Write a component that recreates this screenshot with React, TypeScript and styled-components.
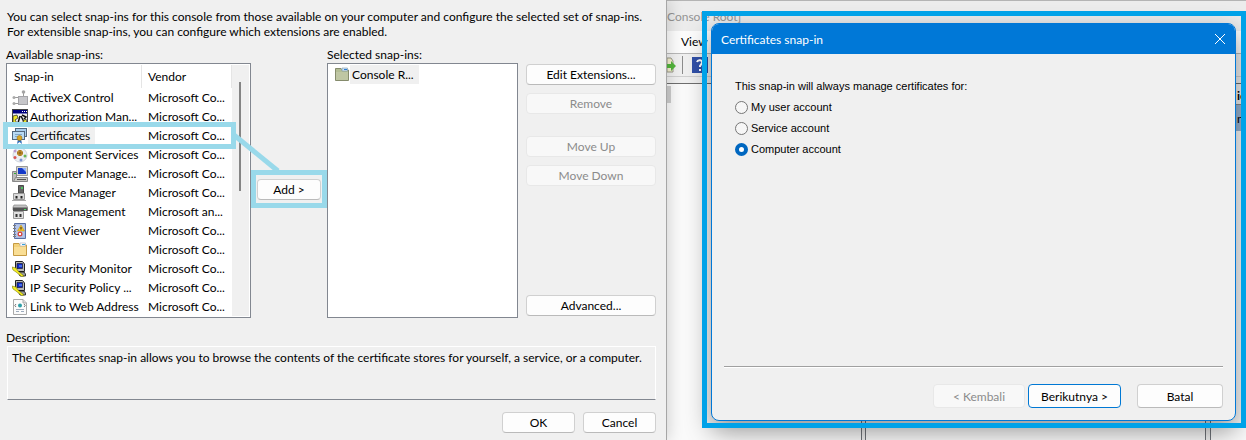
import React from "react";
import styled, { createGlobalStyle, css } from "styled-components";

const Global = createGlobalStyle`
  * { box-sizing: border-box; }
  body { margin: 0; font: 12px/15px Lato, "Open Sans", sans-serif; color: #000; background: #f0f0f0; }
  h1, h2, p, fieldset { margin: 0; padding: 0; border: 0; font: inherit; }
  button, input, textarea { font: inherit; color: inherit; }
`;

const Desktop = styled.div`
  display: grid;
  grid-template-columns: minmax(0, 667fr) minmax(0, 579fr);
  min-height: 100vh;
  overflow: hidden;
`;

/* ---------- Snap-in picker ---------- */
const Picker = styled.section`
  position: relative;
  z-index: 1;
  padding: 9px 10px 7px 6px;
  background: #f0f0f0;
  border-right: 1px solid #a6a6a6;
  box-shadow: 2px 0 14px rgba(0, 0, 0, 0.16);
`;
const Intro = styled.p`
  padding-left: 1px;
  white-space: nowrap;
`;
const Columns = styled.div`
  display: grid;
  grid-template-columns: minmax(0, 245fr) 76px minmax(0, 191fr) 138px;
  margin-top: 8px;
`;
const Column = styled.div`
  display: flex;
  flex-direction: column;
`;
const Label = styled.h2`
  height: 16px;
  line-height: 16px;
`;
const ListFrame = styled.div`
  position: relative;
  display: flex;
  align-items: flex-start;
  flex: 1;
  min-height: 255px;
  padding: 1px;
  background: #fff;
  border: 1px solid #828790;
`;
const TableArea = styled.div`
  flex: 1;
  min-width: 0;
`;
const Table = styled.table`
  width: 100%;
  table-layout: fixed;
  border-collapse: separate;
  border-spacing: 0;
  text-align: left;
  white-space: nowrap;
`;
const HeadCell = styled.th<{ $w?: number }>`
  height: 23px;
  width: ${(p) => (p.$w ? p.$w + "px" : "auto")};
  padding: 0 6px;
  font-weight: 400;
  border-right: 1px solid #e5e5e5;
`;
const Cell = styled.td`
  height: 19px;
  padding: 0 0 0 6px;
`;
const NameCell = styled(Cell)`
  padding-left: 4px;
`;
const Item = styled.span<{ $selected?: boolean }>`
  display: flex;
  align-items: center;
  height: 19px;
  span {
    height: 19px;
    line-height: 19px;
    padding: 0 5px 0 2px;
    ${(p) => p.$selected && css`background: #f0f0f0;`}
  }
`;
const Glyph = styled.svg`
  flex: none;
  width: 16px;
  height: 16px;
`;
const ScrollTrack = styled.div`
  align-self: stretch;
  width: 17px;
  padding: 17px 0 0 7px;
  background: #f0f0f0;
  &::before {
    content: "";
    display: block;
    width: 2px;
    height: 109px;
    background: #858585;
  }
`;
const RowMark = styled.div`
  position: absolute;
  left: -4px;
  right: 14px;
  top: 58px;
  height: 27px;
  border: 5px solid #99d9ea;
`;
const Connector = styled.svg`
  position: absolute;
  right: -34px;
  top: 66px;
  width: 52px;
  height: 44px;
`;
const AddMark = styled.div`
  display: grid;
  place-items: center;
  width: 76px;
  height: 38px;
  margin-top: 123px;
  border: 5px solid #99d9ea;
`;
const TreeItem = styled(Item)`
  margin-left: 5px;
`;
const Actions = styled.div`
  display: flex;
  flex-direction: column;
  gap: 8px;
  padding: 17px 0 2px 8px;
`;
const Gap = styled.div<{ $grow?: boolean }>`
  height: 6px;
  flex: ${(p) => (p.$grow ? 1 : "none")};
`;
const Button = styled.button<{ $w?: number; $tall?: boolean; $main?: boolean }>`
  width: ${(p) => (p.$w ? p.$w + "px" : "auto")};
  height: ${(p) => (p.$tall ? 24 : 21)}px;
  padding: 0;
  line-height: 15px;
  background: #fdfdfd;
  border: 1px solid #d0d0d0;
  border-bottom-color: #bababa;
  border-radius: 4px;
  ${(p) => p.$main && css`border-color: #0078d4;`}
  &:disabled {
    color: #8b8b8b;
    background: #f8f8f8;
    border-color: #e8e8e8;
  }
`;
const DescriptionLabel = styled(Label)`
  margin-top: 12px;
`;
const Description = styled.p`
  min-height: 54px;
  margin-left: 1px;
  padding: 3px 4px;
  white-space: nowrap;
  border: 1px solid #fff;
  border-bottom-color: #828790;
`;
const Footer = styled.div`
  display: flex;
  justify-content: flex-end;
  gap: 8px;
  margin-top: 12px;
`;

/* ---------- Console window behind ---------- */
const Console = styled.section`
  position: relative;
  display: flex;
  flex-direction: column;
  background: #f0f0f0;
  border-top: 1px solid #b4b4b4;
`;
const ConsoleTitle = styled.h1`
  height: 30px;
  line-height: 31px;
  color: #949494;
  background: #ececec;
  white-space: nowrap;
`;
const MenuBar = styled.nav`
  height: 22px;
  padding-left: 14px;
  line-height: 22px;
  background: #fcfcfc;
`;
const Toolbar = styled.div`
  display: flex;
  align-items: center;
  height: 24px;
  border-top: 1px solid #b8b8b8;
  border-bottom: 1px solid #d0d0d0;
`;
const ExportGlyph = styled(Glyph)`
  width: 9px;
`;
const Divider = styled.span`
  width: 1px;
  height: 18px;
  margin: 0 9px 0 6px;
  background: #8c8c8c;
`;
const Panes = styled.div`
  display: grid;
  grid-template-columns: minmax(0, 194fr) 5px minmax(0, 339fr) 6px minmax(0, 35fr);
  flex: 1;
  margin-top: 6px;
  border-top: 1px solid #6e6e6e;
`;
const Pane = styled.div`
  background: #fafafa;
`;
const Splitter = styled.div`
  background: #f0f0f0;
  border: 1px solid #70747a;
  border-width: 0 1px;
`;
const TreeThumb = styled.div`
  width: 4px;
  height: 17px;
  margin-top: 2px;
  background: #cdcdcd;
`;
const SideHead = styled.div`
  height: 21px;
  padding-left: 26px;
  font-weight: 700;
  line-height: 23px;
  background: #f0f0f0;
  border-bottom: 1px solid #8a8a8a;
  overflow: hidden;
`;
const SideItem = styled.div`
  height: 26px;
  padding-left: 26px;
  line-height: 28px;
  background: #99b4d1;
  overflow: hidden;
`;

/* ---------- Certificates dialog ---------- */
const DialogMark = styled.div`
  position: absolute;
  inset: 10px 0 12px 35px;
  display: flex;
  padding: 12px 10px 7px 9px;
  &::after {
    content: "";
    position: absolute;
    inset: 0;
    border: 5px solid #00a2e8;
    pointer-events: none;
  }
`;
const Dialog = styled.section`
  display: flex;
  flex: 1;
  flex-direction: column;
  background: #f0f0f0;
  border: 1px solid #0078d7;
  border-radius: 8px;
  box-shadow: 0 10px 26px rgba(0, 0, 0, 0.42);
  overflow: hidden;
`;
const TitleBar = styled.header`
  display: flex;
  align-items: center;
  justify-content: space-between;
  height: 30px;
  padding: 0 9px;
  color: #fff;
  background: #0078d7;
`;
const Close = styled.button`
  display: flex;
  padding: 0;
  color: #fff;
  background: none;
  border: 0;
`;
const Choices = styled.fieldset`
  display: flex;
  flex: 1;
  flex-direction: column;
  gap: 5px;
  margin: 0 12px;
  padding: 24px 11px;
  font: 11px/16px "Liberation Sans", Arial, sans-serif;
  border-bottom: 1px solid #a0a0a0;
  box-shadow: 0 1px #fff;
`;
const Choice = styled.label`
  display: flex;
  align-items: center;
  gap: 3px;
  height: 16px;
`;
const Radio = styled.input`
  appearance: none;
  width: 13px;
  height: 13px;
  margin: 0;
  background: #f6f6f6;
  border: 1px solid #767676;
  border-radius: 50%;
  &:checked {
    background: #fff;
    border: 4px solid #0067c0;
  }
`;
const DialogFooter = styled.footer`
  display: flex;
  justify-content: flex-end;
  gap: 3px;
  padding: 17px 12px 12px;
`;
const CancelSlot = styled.div`
  margin-left: 13px;
`;

const icons: Record<string, React.ReactNode> = {
  activex: (
    <>
      <path d="M2 7.500H7M2 13.500H7M11.500 2V6" stroke="#9a9a9a" />
      <rect x="6.500" y="6.500" width="9" height="8" fill="#c6c6ca" stroke="#a4a4a8" />
      <circle cx="2" cy="7.500" r="1.500" fill="#aaa" /><circle cx="2" cy="13.500" r="1.500" fill="#aaa" /><circle cx="11.500" cy="2" r="1.800" fill="#a4a4a4" />
    </>
  ),
  auth: (
    <>
      <rect x=".5" y=".5" width="15" height="15" fill="#f0f0f0" stroke="#444" />
      <path d="M1 1H15V4.500H1Z" fill="#000080" /><path d="M10 2.500h1m1 0h1m1 0h1" stroke="#fff" />
      <path d="M1 7 5 6 6 9 3 11 5 14H1Z" fill="#eee62a" stroke="#222" strokeWidth=".7" />
      <path d="M8 7 6 14M9 7l4 8M10 6l4 2-2 2" stroke="#111" strokeWidth="1.500" fill="none" />
      <path d="M11 12l3-2 1 4-3 1Z" fill="#eee62a" stroke="#222" strokeWidth=".7" />
    </>
  ),
  cert: (
    <>
      <rect x="3.500" y=".5" width="11" height="8" fill="#a9cdec" stroke="#53687e" />
      <rect x=".5" y="3.500" width="12" height="8" fill="#b9daf3" stroke="#53687e" />
      <path d="M3 6.500H10M3 8.500H5" stroke="#7fa6c8" />
      <path d="M6 11 5 16 7.500 14 10 16 9 11Z" fill="#2d6dbb" />
      <circle cx="7.500" cy="10" r="2.500" fill="#d9a524" stroke="#9b7217" strokeWidth=".6" />
    </>
  ),
  component: (
    <>
      <circle cx="8" cy="8" r="7" fill="#eceff3" stroke="#cfd5dd" />
      <circle cx="8" cy="6" r="2.600" fill="#f3bd39" stroke="#a87624" /><path d="M8 4v4M6 6h4" stroke="#775018" />
      <circle cx="3" cy="10.500" r="1.500" fill="#d95656" /><circle cx="13" cy="9" r="1.500" fill="#6ab655" /><circle cx="9" cy="13" r="1.500" fill="#7d93cf" /><circle cx="3" cy="4" r="1.500" fill="#bb9bd0" />
    </>
  ),
  computer: (
    <>
      <path d="M4.500.5H15.500V9.500H4.500Z" fill="#d4d4cf" stroke="#999" /><path d="M6 2H14V8H6Z" fill="#1539c8" /><path d="M10 2H14V6Z" fill="#8fb2ff" />
      <path d="M.5 5.500H4.500V15.500H.5Z" fill="#bbb" stroke="#888" /><path d="M3.500 11.500H15.500V15.500H1.500Z" fill="#c9c9c4" stroke="#888" /><path d="M5 13.500h9" stroke="#555" /><path d="M2 7.500h2" stroke="#3a3" />
    </>
  ),
  device: (
    <>
      <path d="M6.500.5H11.500V8H6.500Z" fill="#666" stroke="#4c4c4c" /><path d="M9 2h2v2H9Z" fill="#4fc263" />
      <path d="M1.500 8.500H12.500V14.500H1.500Z" fill="#d9d9d9" stroke="#999" /><path d="M4.500 11v2.500M9.500 11v2.500" stroke="#222" strokeWidth="2" /><path d="M0 15.500h14" stroke="#aaa" />
    </>
  ),
  disk: (
    <>
      <path d="M2 1H14L15.500 3V6H1V3Z" fill="#c4c4c4" stroke="#888" strokeWidth=".7" /><path d="M1 3.500H15.500V7H1Z" fill="#555" /><path d="M12 5.500h2" stroke="#4fd963" />
      <path d="M1.500 7.500H11.500V14.500H1.500Z" fill="#e0e0e0" stroke="#999" /><path d="M4.500 10v3M8.500 10v3" stroke="#333" strokeWidth="2" />
    </>
  ),
  event: (
    <>
      <path d="M2.500.5H13.500V15.500H2.500Z" fill="#a9bde5" stroke="#5a70a4" /><path d="M4 2H12V14H4Z" fill="#b4c5ea" />
      <path d="M1 2.500h3M1 5.500h3M1 8.500h3M1 11.500h3M1 13.500h3" stroke="#7c7c7c" />
      <path d="M9 2 12.500 8H5.500Z" fill="#f5c426" stroke="#c2971c" strokeWidth=".6" /><path d="M9 4v2.500" stroke="#222" />
      <circle cx="8" cy="11" r="2.500" fill="#d84b43" /><path d="M7 10l2 2m0-2-2 2" stroke="#fff" />
    </>
  ),
  folder: (
    <>
      <path d="M1.500 1.500H7L8.500 3H14.500V13.500H1.500Z" fill="#f3d27b" stroke="#c69b43" /><path d="M8 1h5.500v3H8Z" fill="#fff" stroke="#aab" strokeWidth=".6" /><path d="M10 2.500h3" stroke="#36a3d9" />
      <path d="M2 5H14V13H2Z" fill="#f9de95" />
    </>
  ),
  root: (
    <>
      <path d="M1.500 1.500H7L8.500 3H14.500V13.500H1.500Z" fill="#b3bd94" stroke="#858b6c" /><path d="M8 1h5.500v3H8Z" fill="#cfe2f2" stroke="#7b96a8" strokeWidth=".6" /><path d="M10 2.500h3" stroke="#2a7fd9" />
      <path d="M2 5H14V13H2Z" fill="#bfc6a3" />
    </>
  ),
  ipsec: (
    <>
      <path d="M3.500.5H10.500L12.500 3V10.500H5.500L3.500 9Z" fill="#b8b8b8" stroke="#222" /><path d="M5 2.500H10.500V7.500H5Z" fill="#1028c8" stroke="#111" strokeWidth=".6" /><path d="M7 5h3" stroke="#7fb7ff" />
      <path d="M6 11H12L13.500 13V15H8Z" fill="#9a9a9a" stroke="#111" strokeWidth=".8" />
      <path d="M0 6 4 7 6 10 12 15 9.500 15.500 4 11 1 9Z" fill="#f4ee20" stroke="#6b6800" strokeWidth=".5" />
    </>
  ),
  link: (
    <>
      <path d="M1.500.5H11L14.500 4V15.500H1.500Z" fill="#fbfbfb" stroke="#aaa" /><path d="M11 .5V4H14.500" fill="#ddd" stroke="#aaa" />
      <circle cx="8" cy="6.500" r="2" fill="#2d9fa8" /><path d="M4 5 2.800 6.500 4 8M12 5l1.200 1.500L12 8" fill="none" stroke="#777" /><path d="M4 10.500h8M4 12.500h3M9 12.500h3" stroke="#9dabbd" />
    </>
  ),
};

const Icon = ({ name }: { name: string }) => (
  <Glyph viewBox="0 0 16 16" fill="none" aria-hidden="true">{icons[name]}</Glyph>
);

const snapIns = [
  ["activex", "ActiveX Control", "Microsoft Co..."],
  ["auth", "Authorization Man...", "Microsoft Co..."],
  ["cert", "Certificates", "Microsoft Co..."],
  ["component", "Component Services", "Microsoft Co..."],
  ["computer", "Computer Manage...", "Microsoft Co..."],
  ["device", "Device Manager", "Microsoft Co..."],
  ["disk", "Disk Management", "Microsoft an..."],
  ["event", "Event Viewer", "Microsoft Co..."],
  ["folder", "Folder", "Microsoft Co..."],
  ["ipsec", "IP Security Monitor", "Microsoft Co..."],
  ["ipsec", "IP Security Policy ...", "Microsoft Co..."],
  ["link", "Link to Web Address", "Microsoft Co..."],
];

export default function App() {
  return (
    <Desktop>
      <Global />
      <Picker>
        <Intro>
          You can select snap-ins for this console from those available on your computer and configure the selected set of snap-ins.
          <br />
          For extensible snap-ins, you can configure which extensions are enabled.
        </Intro>
        <Columns>
          <Column>
            <Label>Available snap-ins:</Label>
            <ListFrame>
              <TableArea>
                <Table>
                  <thead>
                    <tr><HeadCell $w={134}>Snap-in</HeadCell><HeadCell>Vendor</HeadCell></tr>
                  </thead>
                  <tbody>
                    {snapIns.map(([icon, name, vendor]) => (
                      <tr key={name}>
                        <NameCell><Item $selected={name === "Certificates"}><Icon name={icon} /><span>{name}</span></Item></NameCell>
                        <Cell>{vendor}</Cell>
                      </tr>
                    ))}
                  </tbody>
                </Table>
              </TableArea>
              <ScrollTrack />
              <RowMark />
              <Connector viewBox="0 0 52 44" aria-hidden="true">
                <path d="M2 5 46 41" stroke="#99d9ea" strokeWidth="5" />
              </Connector>
            </ListFrame>
          </Column>
          <Column>
            <AddMark><Button $w={64}>Add &gt;</Button></AddMark>
          </Column>
          <Column>
            <Label>Selected snap-ins:</Label>
            <ListFrame>
              <TreeItem $selected><Icon name="root" /><span>Console R...</span></TreeItem>
            </ListFrame>
          </Column>
          <Actions>
            <Button>Edit Extensions...</Button>
            <Button disabled>Remove</Button>
            <Gap />
            <Button disabled>Move Up</Button>
            <Button disabled>Move Down</Button>
            <Gap $grow />
            <Button>Advanced...</Button>
          </Actions>
        </Columns>
        <DescriptionLabel>Description:</DescriptionLabel>
        <Description>
          The Certificates snap-in allows you to browse the contents of the certificate stores for yourself, a service, or a computer.
        </Description>
        <Footer>
          <Button $w={73}>OK</Button>
          <Button $w={73}>Cancel</Button>
        </Footer>
      </Picker>

      <Console>
        <ConsoleTitle>Console Root]</ConsoleTitle>
        <MenuBar>View</MenuBar>
        <Toolbar>
          <ExportGlyph viewBox="0 0 9 16" aria-hidden="true">
            <path d="M0 1H4L6 4V15H0Z" fill="#f5efcf" stroke="#998" /><path d="M0 7H4V4L9 9 4 14V11H0Z" fill="#53b53c" />
          </ExportGlyph>
          <Divider />
          <Glyph viewBox="0 0 16 16" aria-hidden="true">
            <path d="M0 0H16V16H0Z" fill="#3150a8" /><path d="M5 5c1-3 6-2 5 1L8 9v1M8 12v2" stroke="#fff" strokeWidth="2" fill="none" />
          </Glyph>
        </Toolbar>
        <Panes>
          <Pane><TreeThumb /></Pane>
          <Splitter />
          <Pane />
          <Splitter />
          <Pane><SideHead>ic</SideHead><SideItem>n</SideItem></Pane>
        </Panes>
        <DialogMark>
          <Dialog>
            <TitleBar>
              <h2>Certificates snap-in</h2>
              <Close aria-label="Close">
                <svg width="12" height="12" viewBox="0 0 12 12"><path d="M1 1 11 11M11 1 1 11" stroke="currentColor" /></svg>
              </Close>
            </TitleBar>
            <Choices>
              <p>This snap-in will always manage certificates for:</p>
              <Choice><Radio type="radio" name="account" />My user account</Choice>
              <Choice><Radio type="radio" name="account" />Service account</Choice>
              <Choice><Radio type="radio" name="account" defaultChecked />Computer account</Choice>
            </Choices>
            <DialogFooter>
              <Button $w={92} $tall disabled>&lt; Kembali</Button>
              <Button $w={93} $tall $main>Berikutnya &gt;</Button>
              <CancelSlot><Button $w={86} $tall>Batal</Button></CancelSlot>
            </DialogFooter>
          </Dialog>
        </DialogMark>
      </Console>
    </Desktop>
  );
}
